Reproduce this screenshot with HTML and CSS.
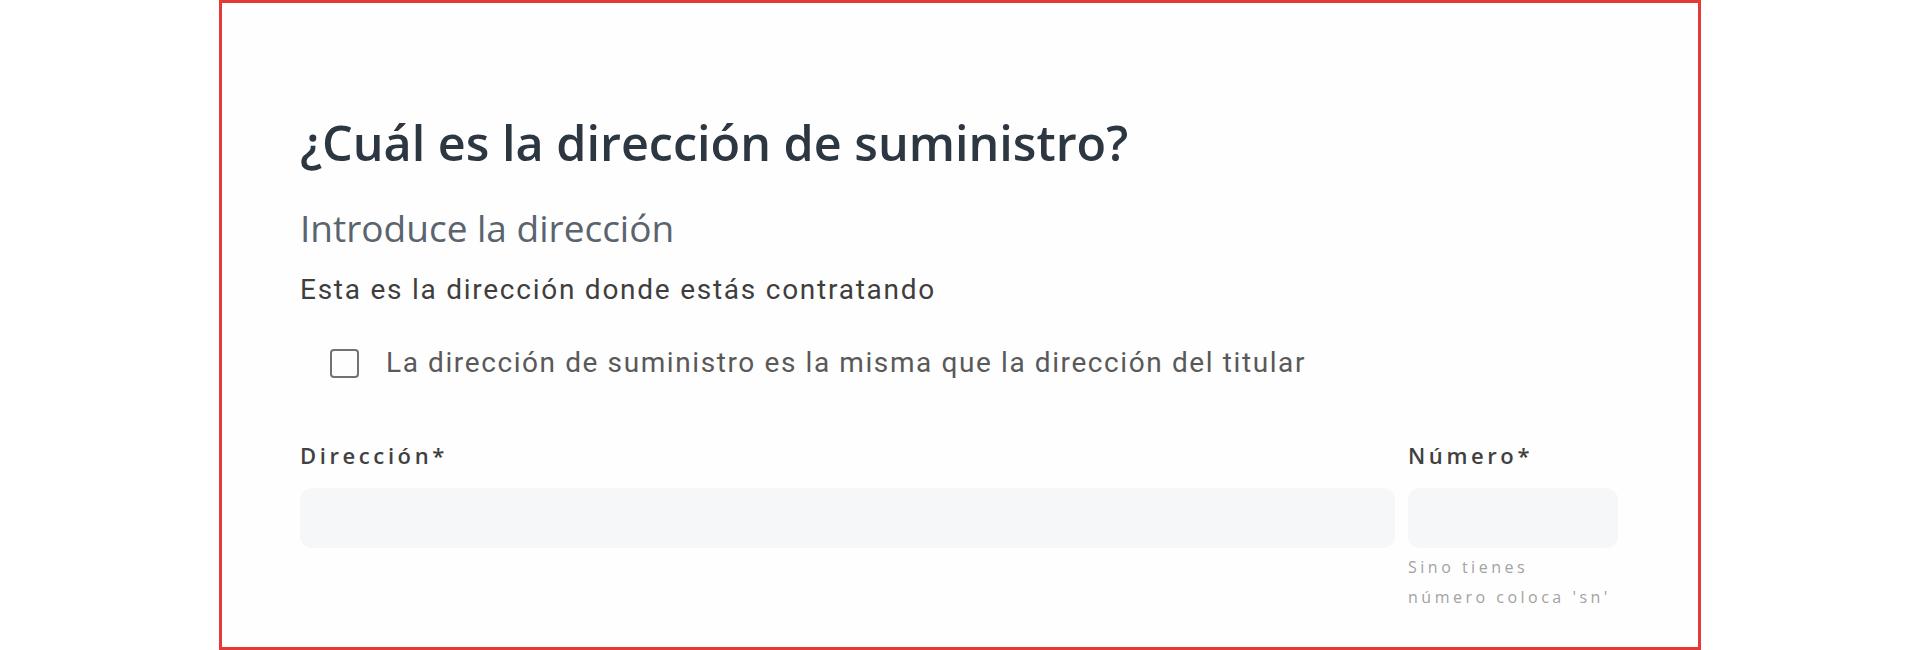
FILE: index.html
```html
<!DOCTYPE html>
<html lang="es">
<head>
<meta charset="utf-8">
<title>Dirección de suministro</title>
<link rel="stylesheet" href="styles.css">
</head>
<body>
<main class="frame">
  <section class="form">
    <h1 class="title">¿Cuál es la dirección de suministro?</h1>
    <h2 class="subtitle">Introduce la dirección</h2>
    <p class="desc">Esta es la dirección donde estás contratando</p>
    <label class="check-row">
      <span class="checkbox"></span>
      <span class="check-label">La dirección de suministro es la misma que la dirección del titular</span>
    </label>
    <div class="fields">
      <div class="field">
        <span class="field-label">Dirección*</span>
        <div class="input"></div>
      </div>
      <div class="field">
        <span class="field-label">Número*</span>
        <div class="input"></div>
        <span class="hint">Sino tienes<br>número coloca 'sn'</span>
      </div>
    </div>
  </section>
</main>
</body>
</html>
```
FILE: styles.css
```css
html, body {
  margin: 0;
  padding: 0;
  background: #ffffff;
}

.frame {
  box-sizing: border-box;
  width: 1482px;
  height: 650px;
  margin: 0 auto;
  border: 3px solid #e53935;
  background: #fefefe;
  overflow: hidden;
}

.form {
  padding: 111px 80px 0 78px;
}

.title {
  margin: 0;
  font-family: "Open Sans", sans-serif;
  font-weight: 600;
  font-size: 48.5px;
  line-height: 56px;
  color: #2c3742;
}

.subtitle {
  margin: 36px 0 0;
  font-family: "Open Sans", sans-serif;
  font-weight: 400;
  font-size: 37px;
  line-height: 44px;
  color: #5a646e;
}

.desc {
  margin: 22px 0 0;
  font-family: Roboto, sans-serif;
  font-size: 28px;
  line-height: 36px;
  letter-spacing: 1.75px;
  color: #3e3e3e;
}

.check-row {
  display: flex;
  align-items: center;
  gap: 27px;
  margin: 37px 0 0 30px;
}

.checkbox {
  box-sizing: border-box;
  width: 29px;
  height: 29px;
  border: 2.5px solid #727272;
  border-radius: 4px;
  flex: none;
}

.check-label {
  font-family: Roboto, sans-serif;
  font-size: 28px;
  line-height: 36px;
  letter-spacing: 1.6px;
  color: #595959;
}

.fields {
  display: grid;
  grid-template-columns: 1fr 210px;
  column-gap: 13px;
  margin-top: 60px;
}

.field {
  display: flex;
  flex-direction: column;
}

.field-label {
  font-family: "Open Sans", sans-serif;
  font-weight: 600;
  font-size: 22px;
  line-height: 28px;
  letter-spacing: 3.6px;
  color: #404040;
}

.input {
  margin-top: 19px;
  height: 60px;
  border-radius: 12px;
  background: #f6f7f9;
}

.hint {
  margin-top: 4px;
  font-family: "Open Sans", sans-serif;
  font-size: 16px;
  line-height: 30px;
  letter-spacing: 3.5px;
  color: #a2a2a2;
}
```
